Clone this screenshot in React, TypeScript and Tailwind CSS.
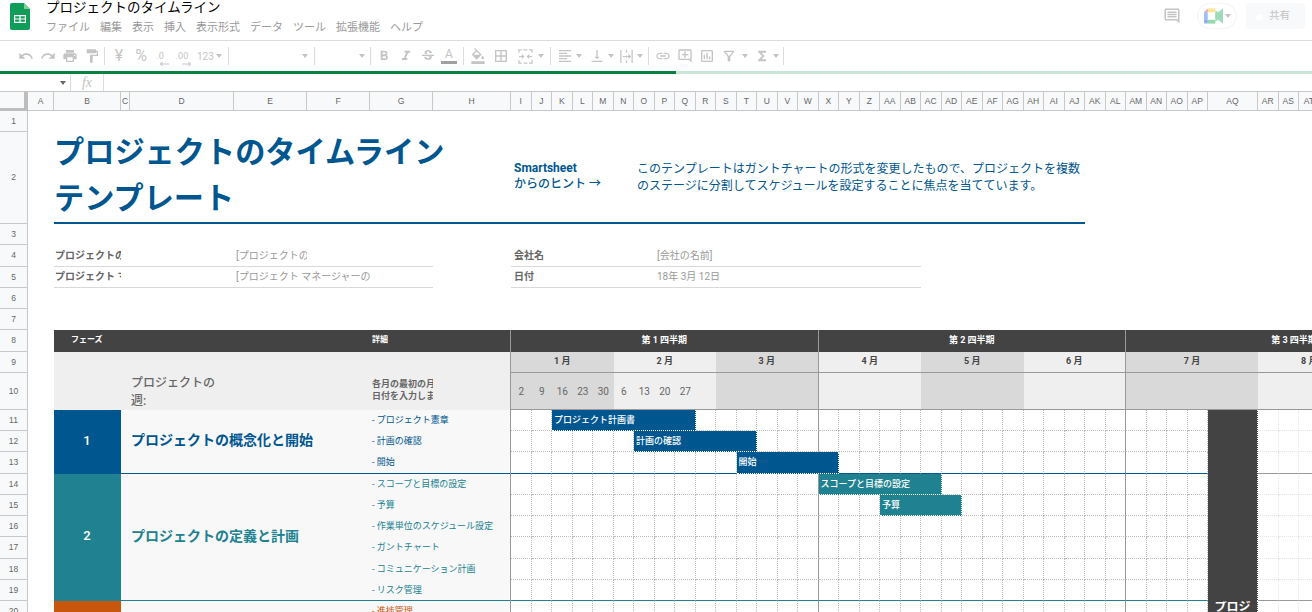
import type { ReactNode } from 'react';
import {
  MdUndo,
  MdRedo,
  MdPrint,
  MdFormatPaint,
  MdFormatBold,
  MdFormatItalic,
  MdStrikethroughS,
  MdOutlineFormatColorFill,
  MdBorderAll,
  MdFormatAlignLeft,
  MdVerticalAlignBottom,
  MdLink,
  MdOutlineAddComment,
  MdOutlineInsertChart,
  MdOutlineFilterAlt,
  MdFunctions,
  MdOutlineComment,
  MdLock,
} from 'react-icons/md';

const menus = ['ファイル', '編集', '表示', '挿入', '表示形式', 'データ', 'ツール', '拡張機能', 'ヘルプ'];

const columnName = (i: number) =>
  i < 26 ? String.fromCharCode(65 + i) : 'A' + String.fromCharCode(65 + i - 26);

const rowNumbers = Array.from({ length: 20 }, (_, i) => i + 1);
// sheet columns A..AU sit on grid lines 2..48
const columnIndexes = Array.from({ length: 47 }, (_, i) => i);

const Caret = ({ className = '' }: { className?: string }) => (
  <span className={`inline-block h-0 w-0 border-x-[3.5px] border-t-[4px] border-x-transparent border-t-[#c4c4c4] ${className}`} />
);

const Sep = ({ className = '' }: { className?: string }) => (
  <span className={`h-[18px] w-px shrink-0 bg-[#dadce0] ${className}`} />
);

const Tool = ({ children, className = '' }: { children: ReactNode; className?: string }) => (
  <span className={`flex h-[22px] w-[22px] shrink-0 items-center justify-center text-[16px] text-[#c4c4c4] ${className}`}>
    {children}
  </span>
);

function Toolbar() {
  return (
    <div className="flex h-[30px] items-center pl-[15px] text-[#c4c4c4]">
      <Tool><MdUndo /></Tool>
      <Tool><MdRedo /></Tool>
      <Tool><MdPrint /></Tool>
      <Tool><MdFormatPaint /></Tool>
      <Sep className="ml-[1px]" />
      <Tool className="ml-[3px] text-[9px]">¥</Tool>
      <Tool className="text-[9px]">%</Tool>
      <Tool className="ml-[-3px]">
        <span className="relative text-[9px] leading-none">.0
          <svg viewBox="0 0 10 4" className="absolute left-[3px] top-[10px] h-[4px] w-[10px]">
            <path d="M10 2H2M4 0L1 2l3 2" fill="none" stroke="#c4c4c4" />
          </svg>
        </span>
      </Tool>
      <Tool>
        <span className="relative text-[9px] leading-none">.00
          <svg viewBox="0 0 10 4" className="absolute left-[6px] top-[10px] h-[4px] w-[10px]">
            <path d="M0 2h8M6 0l3 2-3 2" fill="none" stroke="#c4c4c4" />
          </svg>
        </span>
      </Tool>
      <span className="ml-[4px] flex w-[30px] items-center gap-[2px] text-[10px]">123<Caret /></span>
      <Sep className="ml-[1px]" />
      <span className="flex h-[22px] w-[85px] shrink-0 items-center justify-end pr-[6px]"><Caret /></span>
      <Sep />
      <span className="flex h-[22px] w-[55px] shrink-0 items-center justify-end pr-[5px]"><Caret /></span>
      <Sep />
      <Tool className="ml-[2px]"><MdFormatBold /></Tool>
      <Tool><MdFormatItalic /></Tool>
      <Tool><MdStrikethroughS /></Tool>
      <Tool className="ml-[-1px]">
        <span className="flex flex-col items-center text-[12px] leading-[12px] text-[#c4c4c4]">
          A<span className="mt-[1px] h-[3px] w-[16px] bg-[#a0a0a0]" />
        </span>
      </Tool>
      <Sep className="ml-[3px]" />
      <Tool className="ml-[3px]"><MdOutlineFormatColorFill /></Tool>
      <Tool className="ml-[1px]"><MdBorderAll /></Tool>
      <Tool className="ml-[2px]">
        <svg viewBox="0 0 16 16" className="h-[15px] w-[15px]" fill="none" stroke="#c4c4c4" strokeWidth="1.3">
          <path d="M1 4V1h3M6 1h4M12 1h3v3M1 12v3h3M6 15h4M12 15h3v-3M1 8h5M15 8h-5M4 6l2 2-2 2M12 6l-2 2 2 2" />
        </svg>
      </Tool>
      <Caret className="ml-[2px]" />
      <Sep className="ml-[6px]" />
      <Tool className="ml-[3px]"><MdFormatAlignLeft /></Tool>
      <Caret />
      <Tool className="ml-[4px]"><MdVerticalAlignBottom /></Tool>
      <Caret />
      <Tool className="ml-[1px]">
        <svg viewBox="0 0 16 16" className="h-[15px] w-[15px]" fill="none" stroke="#c4c4c4" strokeWidth="1.3">
          <path d="M2 1v14M8 1v3M8 7v2M8 12v3M14 1v14M4 8h8M10 6l2 2-2 2" />
        </svg>
      </Tool>
      <Caret />
      <Sep className="ml-[5px]" />
      <Tool className="ml-[3px]"><MdLink /></Tool>
      <Tool><MdOutlineAddComment /></Tool>
      <Tool><MdOutlineInsertChart /></Tool>
      <Tool><MdOutlineFilterAlt /></Tool>
      <Caret className="ml-[2px]" />
      <Tool className="ml-[3px]"><MdFunctions /></Tool>
      <Caret />
      <Sep className="ml-[4px]" />
    </div>
  );
}

function SheetsLogo() {
  return (
    <svg viewBox="0 0 20 27" className="h-[27px] w-[20px]">
      <path d="M2 0h12l6 6v19a2 2 0 0 1-2 2H2a2 2 0 0 1-2-2V2a2 2 0 0 1 2-2z" fill="#0f9d58" />
      <path d="M14 0l6 6h-6z" fill="#87ce9f" />
      <path d="M4 12h12v8H4z" fill="#fff" />
      <path d="M5.2 13.2h4.2v2.2H5.2zM10.6 13.2h4.2v2.2h-4.2zM5.2 16.6h4.2v2.2H5.2zM10.6 16.6h4.2v2.2h-4.2z" fill="#0f9d58" />
    </svg>
  );
}

function MeetIcon() {
  return (
    <svg viewBox="0 0 20 16" className="h-[16px] w-[19px] opacity-60">
      <path d="M4 0h8v4H4z" fill="#fbd44f" />
      <path d="M4 0v4H0z" fill="#ea6a5a" />
      <path d="M0 4h4v8H0z" fill="#5b9bf0" />
      <path d="M0 12h4v4H2a2 2 0 0 1-2-2z" fill="#3c78d8" />
      <path d="M4 12h8v4H4z" fill="#4fc07a" />
      <path d="M12 3h2v10h-2z" fill="#4fc07a" />
      <path d="M12 6l8-6v16l-8-6z" fill="#5fc78a" />
    </svg>
  );
}

function TopBar() {
  return (
    <div className="flex h-[41px] border-b border-[#dadce0] bg-white">
      <div className="ml-[10px] mt-[3px] shrink-0"><SheetsLogo /></div>
      <div className="ml-[16px] min-w-0 flex-1">
        <div className="mt-[-2px] text-[13.5px] leading-[18px] text-black">プロジェクトのタイムライン</div>
        <div className="mt-[4px] flex gap-[10px] text-[11px] leading-[16px] text-[#9a9a9a]">
          {menus.map((m) => (
            <span key={m}>{m}</span>
          ))}
        </div>
      </div>
      <div className="mt-[3px] flex h-[26px] items-center">
        <MdOutlineComment className="text-[18px] text-[#c4c4c4]" />
        <div className="ml-[16px] flex h-[26px] w-[40px] items-center justify-center gap-[2px] rounded-full border border-[#f4f4f4]">
          <MeetIcon />
          <Caret />
        </div>
        <div className="ml-[9px] mr-[7px] flex h-[26px] w-[59px] items-center gap-[5px] rounded-[3px] bg-[#f8f9fa] pl-[9px] text-[10.5px] text-[#c4c4c4]">
          <MdLock className="text-[9px] text-white" />
          共有
        </div>
      </div>
    </div>
  );
}

function FormulaBar() {
  return (
    <div className="flex h-[18px] items-center border-b border-[#c8c8c8] bg-white">
      <div className="flex h-[17px] w-[71px] items-center justify-end border-r border-[#dadce0] pr-[4px]">
        <span className="h-0 w-0 border-x-[3.5px] border-t-[4px] border-x-transparent border-t-[#666]" />
      </div>
      <div className="flex h-[17px] w-[33px] items-center justify-center border-r border-[#dadce0] font-['Liberation_Serif',serif] text-[14px] italic text-[#c4c4c4]">
        fx
      </div>
    </div>
  );
}

const navy = '#00568f';
const teal = '#208290';

const phases = [
  {
    num: '1',
    title: 'プロジェクトの概念化と開始',
    text: 'text-[#00568f]',
    bg: 'bg-[#00568f]',
    line: 'border-[#00568f]',
    row: 'row-start-12 row-span-3',
    items: ['- プロジェクト憲章', '- 計画の確認', '- 開始'],
  },
  {
    num: '2',
    title: 'プロジェクトの定義と計画',
    text: 'text-[#208290]',
    bg: 'bg-[#208290]',
    line: 'border-[#208290]',
    row: 'row-start-15 row-span-6',
    items: ['- スコープと目標の設定', '- 予算', '- 作業単位のスケジュール設定', '- ガントチャート', '- コミュニケーション計画', '- リスク管理'],
  },
  {
    // merged cell runs on below the fold, its number is not visible
    num: '',
    title: '',
    text: 'text-[#c8560d]',
    bg: 'bg-[#c8560d]',
    line: 'border-transparent',
    row: 'row-start-21 row-span-1',
    items: ['- 進捗管理'],
  },
];

const bars = [
  { label: 'プロジェクト計画書', row: 12, col: 12, span: 7, color: navy },
  { label: '計画の確認', row: 13, col: 16, span: 6, color: navy },
  { label: '開始', row: 14, col: 21, span: 5, color: navy },
  { label: 'スコープと目標の設定', row: 15, col: 25, span: 6, color: teal },
  { label: '予算', row: 16, col: 28, span: 4, color: teal },
];

const months = [
  { label: '1 月', col: 10, span: 5, dark: true, end: false, dates: ['2', '9', '16', '23', '30'] },
  { label: '2 月', col: 15, span: 5, dark: false, end: false, dates: ['6', '13', '20', '27'] },
  { label: '3 月', col: 20, span: 5, dark: true, end: true, dates: [] },
  { label: '4 月', col: 25, span: 5, dark: false, end: false, dates: [] },
  { label: '5 月', col: 30, span: 5, dark: true, end: false, dates: [] },
  { label: '6 月', col: 35, span: 5, dark: false, end: true, dates: [] },
  { label: '7 月', col: 40, span: 5, dark: true, end: false, dates: [] },
  { label: '8 月', col: 45, span: 5, dark: false, end: false, dates: [] },
];

const quarters = [
  { label: '第 1 四半期', col: 10, span: 15 },
  { label: '第 2 四半期', col: 25, span: 15 },
  { label: '第 3 四半期', col: 40, span: 15 },
];

function timelineCellClass(row: number, col: number) {
  const faded = col > 44;
  let cls = 'border-r border-b border-dotted bg-white ';
  // quarter ends get a solid line
  if (col === 24 || col === 39) cls += 'border-r-[#999] [border-right-style:solid] ';
  else cls += faded ? 'border-r-[#e4e4e4] ' : 'border-r-[#bdbdbd] ';
  if (row === 14) cls += (faded ? 'border-b-[#999]' : 'border-b-[#00568f]') + ' [border-bottom-style:solid]';
  else if (row === 20) cls += (faded ? 'border-b-[#999]' : 'border-b-[#208290]') + ' [border-bottom-style:solid]';
  else cls += faded ? 'border-b-[#e4e4e4]' : 'border-b-[#bdbdbd]';
  return cls;
}

function Sheet() {
  const timelineRows = [12, 13, 14, 15, 16, 17, 18, 19, 20, 21];
  const timelineCols = Array.from({ length: 39 }, (_, i) => i + 10).filter((c) => c !== 44);

  return (
    <div className="min-h-0 flex-1 overflow-hidden bg-white">
      <div className="grid grid-cols-[28px_26px_67px_9px_104px_73px_63px_63px_78px_repeat(34,20.5px)_50px_repeat(10,20.5px)] grid-rows-[19px_21px_92px_21px_22px_21px_21px_21px_22px_21px_37px_21px_21px_22px_21px_21px_21px_22px_21px_21px_21px]">
        {/* corner */}
        <div className="col-start-1 row-start-1 border-b-[3px] border-r-[4px] border-[#bdbdbd] bg-[#f8f9fa]" />

        {/* column letters */}
        {columnIndexes.map((i) => (
          <div
            key={i}
            style={{ gridColumn: i + 2, gridRow: 1 }}
            className="flex items-center justify-center border-b border-r border-[#c8c8c8] bg-[#f8f9fa] font-['Liberation_Sans',sans-serif] text-[8.5px] text-[#666]"
          >
            {columnName(i)}
          </div>
        ))}

        {/* row numbers */}
        {rowNumbers.map((n) => (
          <div
            key={n}
            style={{ gridColumn: 1, gridRow: n + 1 }}
            className="flex items-center justify-center border-b border-r border-[#c8c8c8] bg-[#f8f9fa] font-['Liberation_Sans',sans-serif] text-[8.5px] text-[#666]"
          >
            {n}
          </div>
        ))}

        {/* title block */}
        <div className="col-start-3 col-span-7 row-start-3 flex items-center border-b-2 border-[#00568f] pb-[3px] text-[30.2px] font-bold leading-[46px] text-[#00568f]">
          <div>
            プロジェクトのタイムライン
            <br />
            テンプレート
          </div>
        </div>
        <div className="col-start-10 col-span-6 row-start-3 flex items-center border-b-2 border-[#00568f] pb-[2px] pl-[3px] text-[12px] font-medium leading-[16px] text-[#00568f]">
          <div>
            <span className="font-bold">Smartsheet</span>
            <br />
            からのヒント →
          </div>
        </div>
        <div className="col-start-16 col-span-22 row-start-3 flex items-center border-b-2 border-[#00568f] pl-[3px] pt-[2px] text-[12px] leading-[17px] text-[#00568f]">
          <div>
            このテンプレートはガントチャートの形式を変更したもので、プロジェクトを複数
            <br />
            のステージに分割してスケジュールを設定することに焦点を当てています。
          </div>
        </div>

        {/* project info */}
        <div className="col-start-3 row-start-5 flex items-center overflow-hidden whitespace-nowrap border-b border-[#d9d9d9] pl-[1px] text-[10px] font-bold text-[#666]">プロジェクトの名前</div>
        <div className="col-start-4 col-span-2 row-start-5 border-b border-[#d9d9d9]" />
        <div className="col-start-6 row-start-5 flex items-center overflow-hidden whitespace-nowrap border-b border-[#d9d9d9] pl-[2px] text-[10px] text-[#999]">[プロジェクトの名前]</div>
        <div className="col-start-7 col-span-2 row-start-5 border-b border-[#d9d9d9]" />
        <div className="col-start-3 row-start-6 flex items-center overflow-hidden whitespace-nowrap border-b border-[#d9d9d9] pb-[1px] pl-[1px] text-[10px] font-bold text-[#666]">プロジェクト マネージャー</div>
        <div className="col-start-4 col-span-2 row-start-6 border-b border-[#d9d9d9]" />
        <div className="col-start-6 col-span-2 row-start-6 flex items-center overflow-hidden whitespace-nowrap border-b border-[#d9d9d9] pb-[1px] pl-[2px] text-[10px] text-[#999]">[プロジェクト マネージャーの名前]</div>
        <div className="col-start-8 row-start-6 border-b border-[#d9d9d9]" />

        <div className="col-start-10 col-span-6 row-start-5 flex items-center border-b border-[#d9d9d9] pl-[3px] text-[10px] font-bold text-[#666]">会社名</div>
        <div className="col-start-16 col-span-14 row-start-5 flex items-center border-b border-[#d9d9d9] pl-[23px] text-[10px] text-[#999]">[会社の名前]</div>
        <div className="col-start-10 col-span-6 row-start-6 flex items-center border-b border-[#d9d9d9] pb-[1px] pl-[3px] text-[10px] font-bold text-[#666]">日付</div>
        <div className="col-start-16 col-span-14 row-start-6 flex items-center border-b border-[#d9d9d9] pb-[1px] pl-[23px] text-[10px] text-[#999]">18年 3月 12日</div>

        {/* table head */}
        <div className="col-start-3 col-span-5 row-start-9 flex items-start bg-[#434343] pl-[17px] pt-[4px] text-[8px] font-bold leading-[12px] text-white">フェーズ</div>
        <div className="col-start-8 col-span-2 row-start-9 flex items-start border-r border-[#999] bg-[#434343] pl-[2px] pt-[4px] text-[8px] font-bold leading-[12px] text-white">詳細</div>
        <div className="col-start-3 col-span-7 row-start-10 row-span-2 border-r border-[#999] bg-[#efefef]" />
        <div className="col-start-5 col-span-3 row-start-10 row-span-2 flex items-end pl-px text-[12px] font-medium leading-[18px] text-[#666]">
          <div>
            プロジェクトの
            <br />
            週:
          </div>
        </div>
        <div className="col-start-8 row-start-10 row-span-2 flex items-end overflow-hidden whitespace-nowrap pb-[8px] pl-[2px] text-[9px] font-bold leading-[12px] text-[#666]">
          <div>
            各月の最初の月曜
            <br />
            日付を入力します
          </div>
        </div>

        {quarters.map((q) => (
          <div
            key={q.label}
            style={{ gridColumn: `${q.col} / span ${q.span}`, gridRow: 9 }}
            className="flex items-start justify-center border-r border-[#999] bg-[#434343] pt-[4px] text-[9px] font-bold leading-[12px] text-white"
          >
            {q.label}
          </div>
        ))}

        {months.map((m) => (
          <div
            key={m.label}
            style={{ gridColumn: `${m.col} / span ${m.span}`, gridRow: 10 }}
            className={`flex items-center justify-center border-b border-[#999] text-[9px] font-bold text-[#444] ${m.dark ? 'bg-[#d9d9d9]' : 'bg-[#efefef]'} ${m.end ? 'border-r' : ''}`}
          >
            {m.label}
          </div>
        ))}
        {months.map((m) => (
          <div
            key={m.label}
            style={{ gridColumn: `${m.col} / span ${m.span}`, gridRow: 11 }}
            className={`flex items-center border-b border-[#999] text-[10px] text-[#666] ${m.dark ? 'bg-[#d9d9d9]' : 'bg-[#efefef]'} ${m.end ? 'border-r' : ''}`}
          >
            {m.dates.map((d) => (
              <span key={d} className="w-[20.5px] shrink-0 text-center">{d}</span>
            ))}
          </div>
        ))}

        {/* timeline grid */}
        {timelineRows.map((r) =>
          timelineCols.map((c) => (
            <div key={`${r}-${c}`} style={{ gridColumn: c, gridRow: r }} className={timelineCellClass(r, c)} />
          ))
        )}

        {/* phases */}
        {phases.map((p) => (
          <div key={p.row} className="contents">
            <div className={`col-start-3 flex items-center justify-center pb-[3px] pr-[1px] text-[13px] font-medium text-white ${p.bg} ${p.row}`}>{p.num}</div>
            <div className={`col-start-4 col-span-6 border-b bg-[#f8f8f8] ${p.line} ${p.row}`} />
            <div className={`col-start-5 col-span-3 flex items-center pb-[3px] pl-px text-[14px] font-semibold ${p.text} ${p.row}`}>{p.title}</div>
          </div>
        ))}
        {phases.flatMap((p, pi) =>
          p.items.map((item, i) => (
            <div
              key={item}
              style={{ gridRow: (pi === 0 ? 12 : pi === 1 ? 15 : 21) + i }}
              className={`col-start-8 col-span-2 flex items-center whitespace-nowrap border-r border-r-[#999] pl-[2px] text-[9px] ${p.text}`}
            >
              {item}
            </div>
          ))
        )}

        {/* gantt bars */}
        {bars.map((b) => (
          <div
            key={b.label}
            style={{ gridColumn: `${b.col} / span ${b.span}`, gridRow: b.row, backgroundColor: b.color }}
            className="z-10 flex items-center overflow-hidden whitespace-nowrap border-b border-r border-dotted border-white pl-[2px] pt-px text-[9px] font-medium text-white"
          >
            {b.label}
          </div>
        ))}

        {/* milestone column */}
        <div className="z-10 col-start-44 row-start-12 row-span-9 border-r border-dotted border-white bg-[#434343]" />
        <div className="z-10 col-start-44 row-start-21 flex items-start justify-center overflow-hidden whitespace-nowrap border-r border-dotted border-white bg-[#434343] text-[12px] font-bold leading-[12px] text-white">
          <span className="mt-[-3px] pt-[3px]">プロジ</span>
        </div>
      </div>
    </div>
  );
}

export default function App() {
  return (
    <div className="flex h-[612px] w-[1312px] flex-col overflow-hidden bg-white font-['Roboto','Noto_Sans_CJK_JP',sans-serif]">
      <TopBar />
      <Toolbar />
      <div className="flex h-[3px] shrink-0">
        <div className="w-[676px] bg-[#0b8043]" />
        <div className="flex-1 bg-[#c8e6d8]" />
      </div>
      <FormulaBar />
      <Sheet />
    </div>
  );
}
